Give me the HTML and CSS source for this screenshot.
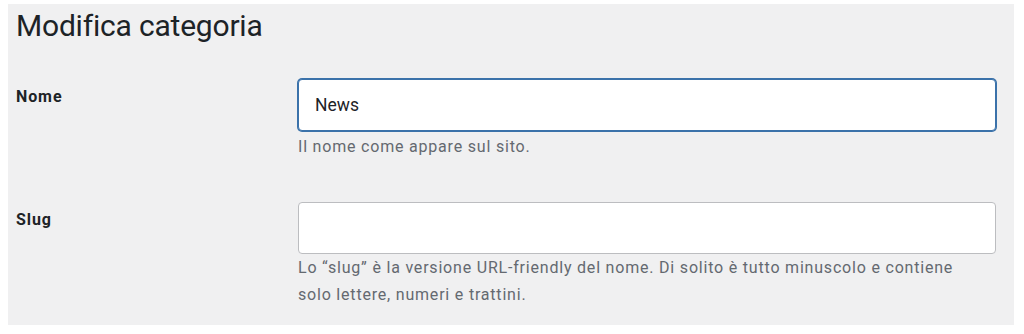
FILE: index.html
```html
<!DOCTYPE html>
<html lang="it">
<head>
    <meta charset="UTF-8">
    <meta name="viewport" content="width=device-width, initial-scale=1.0">
    <title>Modifica categoria</title>
    <link rel="stylesheet" href="styles.css">
</head>
<body>

<div class="wrap">
    <h1>Modifica categoria</h1>

    <form class="form-table">
        <div class="form-row">
            <label for="name">Nome</label>
            <div class="field">
                <input type="text" id="name" class="input focused" value="News">
                <p class="description">Il nome come appare sul sito.</p>
            </div>
        </div>

        <div class="form-row">
            <label for="slug">Slug</label>
            <div class="field">
                <input type="text" id="slug" class="input" value="">
                <p class="description">Lo “slug” è la versione URL-friendly del nome. Di solito è tutto minuscolo e contiene solo lettere, numeri e trattini.</p>
            </div>
        </div>
    </form>
</div>

</body>
</html>
```

FILE: styles.css
```css
body {
    font-family: Roboto, "Liberation Sans", Arial, sans-serif;
    background-color: #fff;
    color: #1d2327;
    margin: 0;
    padding: 4px 10px 9px 8px;
}
.wrap {
    background-color: #f0f0f1;
    padding: 2px 18px 17px 8px;
}
h1 {
    font-size: 30px;
    font-weight: 400;
    letter-spacing: -0.2px;
    line-height: 40px;
    margin: 0 0 33px 0;
}
.form-row {
    display: grid;
    grid-template-columns: 282px 1fr;
    margin-bottom: 42px;
}
.form-row:last-child {
    margin-bottom: 0;
}
.form-row label {
    font-size: 16px;
    font-weight: 700;
    letter-spacing: 0.9px;
    line-height: 20px;
    padding-top: 8px;
}
.input {
    display: block;
    box-sizing: border-box;
    width: 100%;
    height: 52px;
    margin: 0;
    padding: 0 16px;
    font-family: inherit;
    font-size: 17.5px;
    color: #1d2327;
    background-color: #fff;
    border: 1px solid #bcbdc0;
    border-radius: 4px;
    outline: none;
}
.input.focused {
    border-color: #3b72aa;
    box-shadow: 0 0 0 1px #3b72aa;
}
.description {
    font-size: 16px;
    letter-spacing: 0.8px;
    line-height: 27px;
    color: #646970;
    margin: 2px 0 0 0;
    max-width: 680px;
}
.form-row:last-child .description {
    margin-top: 0;
}
```
